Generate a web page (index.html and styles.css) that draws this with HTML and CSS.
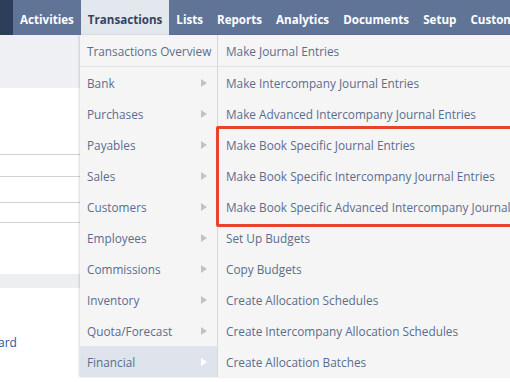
FILE: index.html
```html
<!DOCTYPE html>
<html lang="en">
<head>
  <meta charset="UTF-8" />
  <title>Transactions - Financial</title>
  <link rel="stylesheet" href="styles.css">
</head>
<body>
  <div class="topnav">
    <div class="brand"></div>
    <a class="tab">Activities</a>
    <a class="tab active">Transactions</a>
    <a class="tab">Lists</a>
    <a class="tab">Reports</a>
    <a class="tab">Analytics</a>
    <a class="tab">Documents</a>
    <a class="tab">Setup</a>
    <a class="tab">Customization</a>
  </div>

  <div class="page">
    <div class="page-head"></div>
    <div class="page-body">
      <div class="rule r1"></div>
      <div class="rule r2"></div>
      <div class="rule r3"></div>
      <div class="rule r4"></div>
      <div class="band"></div>
      <a class="link">Dashboard</a>
    </div>

    <div class="dropdown">
      <ul class="menu">
        <li class="first">Transactions Overview</li>
        <li class="sub">Bank</li>
        <li class="sub">Purchases</li>
        <li class="sub">Payables</li>
        <li class="sub">Sales</li>
        <li class="sub">Customers</li>
        <li class="sub">Employees</li>
        <li class="sub">Commissions</li>
        <li class="sub">Inventory</li>
        <li class="sub">Quota/Forecast</li>
        <li class="sub hover">Financial</li>
      </ul>
      <ul class="menu submenu">
        <li class="first">Make Journal Entries</li>
        <li>Make Intercompany Journal Entries</li>
        <li>Make Advanced Intercompany Journal Entries</li>
        <li>Make Book Specific Journal Entries</li>
        <li>Make Book Specific Intercompany Journal Entries</li>
        <li>Make Book Specific Advanced Intercompany Journal Entries</li>
        <li>Set Up Budgets</li>
        <li>Copy Budgets</li>
        <li>Create Allocation Schedules</li>
        <li>Create Intercompany Allocation Schedules</li>
        <li>Create Allocation Batches</li>
      </ul>
      <div class="highlight"></div>
    </div>
  </div>
</body>
</html>
```

FILE: styles.css
```css
body {
  margin: 0;
  font-family: 'Open Sans', 'Noto Sans', sans-serif;
  background: #ffffff;
  overflow: hidden;
}

.topnav {
  display: flex;
  align-items: stretch;
  height: 35px;
  background: #607497;
  white-space: nowrap;
}

.brand {
  width: 13px;
  flex-shrink: 0;
  background: #2d3d5c;
}

.tab {
  display: flex;
  align-items: center;
  padding: 3px 7px 0 7px;
  font-size: 11.6px;
  font-weight: 700;
  color: #ffffff;
  flex-shrink: 0;
}

.tab.active {
  background: #e3e7ee;
  color: #34445f;
}

.page {
  position: relative;
  height: 347px;
}

.page-head {
  height: 53px;
  background: #eef0f3;
}

.page-body {
  position: relative;
}

.rule {
  height: 1px;
  background: #cfd3d9;
  width: 80px;
  position: absolute;
  left: 0;
}

.r1 { top: 66px; }
.r2 { top: 88px; }
.r3 { top: 114px; }
.r4 { top: 134px; }

.band {
  position: absolute;
  left: 0;
  top: 186px;
  width: 80px;
  height: 14px;
  background: #eceef2;
}

.link {
  position: absolute;
  top: 246px;
  left: -45px;
  font-size: 12px;
  color: #2d559a;
}

/* Menú desplegable */
.dropdown {
  position: absolute;
  top: 0;
  left: 80px;
  display: flex;
  box-shadow: -1px 0 2px rgba(0,0,0,0.15);
}

.menu {
  list-style: none;
  margin: 0;
  padding: 0;
  background: #f5f5f5;
  width: 137px;
  border-right: 1px solid #d9d9d9;
}

.submenu {
  width: 300px;
  border-right: none;
}

.menu li {
  height: 30px;
  padding-top: 1px;
  line-height: 31px;
  padding-left: 7px;
  font-size: 11.8px;
  color: #5b6d8e;
  white-space: nowrap;
  position: relative;
}

.submenu li {
  padding-left: 8px;
}

.menu li.first {
  border-bottom: 1px solid #e2e2e2;
}

.menu li.sub::after {
  content: '';
  position: absolute;
  right: 10px;
  top: 12px;
  border-left: 6px solid #bfc3c9;
  border-top: 4.5px solid transparent;
  border-bottom: 4.5px solid transparent;
}

.menu li.hover {
  background: #dfe4ec;
}

.menu li.hover::after {
  border-left-color: #ffffff;
}

.highlight {
  position: absolute;
  left: 136px;
  top: 91px;
  width: 300px;
  height: 95px;
  border: 3px solid #e8432b;
  border-radius: 2px;
}
```
